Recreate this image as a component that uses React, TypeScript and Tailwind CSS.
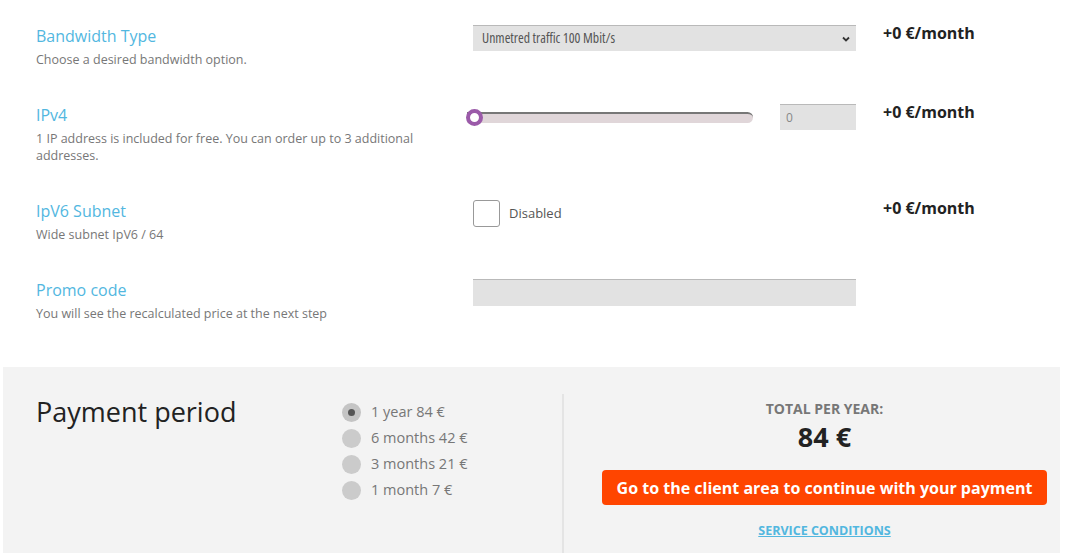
import React from "react";

const font = { fontFamily: "'Open Sans', 'Noto Sans', sans-serif" };

function Row({
  title,
  desc,
  control,
  price,
}: {
  title: string;
  desc: React.ReactNode;
  control: React.ReactNode;
  price?: string;
}) {
  return (
    <div className="flex">
      <div className="w-[437px] shrink-0 pr-[20px]">
        <div className="text-[16px] leading-[24px] text-[#52b7df]">{title}</div>
        <div className="mt-[3px] text-[12.5px] leading-[17px] text-[#777]">{desc}</div>
      </div>
      <div className="w-[383px] shrink-0 pt-[1px]">{control}</div>
      <div className="pl-[27px] text-[16px] font-bold leading-[18px] text-[#222]">{price}</div>
    </div>
  );
}

export default function App() {
  const periods = [
    { label: "1 year 84 €", checked: true },
    { label: "6 months 42 €", checked: false },
    { label: "3 months 21 €", checked: false },
    { label: "1 month 7 €", checked: false },
  ];
  return (
    <div style={font} className="w-[1065px] h-[553px] overflow-hidden bg-white">
      <div className="flex flex-col gap-[35px] pl-[36px] pt-[24px]">
        <Row
          title="Bandwidth Type"
          desc="Choose a desired bandwidth option."
          price="+0 €/month"
          control={
            <div className="flex h-[26px] items-center justify-between border-t border-[#b9b9b9] bg-[#e2e2e2] pl-[9px] pr-[4px] text-[13.8px] text-[#555]">
              <span className="[font-stretch:75%]">Unmetred traffic 100 Mbit/s</span>
              <svg width="12" height="12" viewBox="0 0 12 12">
                <path d="M3 4.5 L6 7.5 L9 4.5" fill="none" stroke="#333" strokeWidth="1.8" />
              </svg>
            </div>
          }
        />
        <Row
          title="IPv4"
          desc={<>1 IP address is included for free. You can order up to 3 additional addresses.</>}
          price="+0 €/month"
          control={
            <div className="flex items-center">
              <div className="relative ml-[-6px] h-[11px] w-[286px] rounded-r-[6px] border-t-2 border-[#777] bg-[#e0d6d9]">
                <div className="absolute left-[-1px] top-[-5px] h-[17px] w-[17px] rounded-full border-[4px] border-[#9b5aa9] bg-white"></div>
              </div>
              <div className="ml-[27px] flex h-[26px] w-[76px] items-center border-t border-[#b9b9b9] bg-[#e2e2e2] pl-[6px] text-[12px] text-[#888]">
                0
              </div>
            </div>
          }
        />
        <Row
          title="IpV6 Subnet"
          desc="Wide subnet IpV6 / 64"
          price="+0 €/month"
          control={
            <div className="flex items-center">
              <div className="h-[27px] w-[27px] rounded-[3px] border border-[#999] bg-white"></div>
              <span className="ml-[9px] text-[13px] text-[#555]">Disabled</span>
            </div>
          }
        />
        <Row
          title="Promo code"
          desc="You will see the recalculated price at the next step"
          control={<div className="h-[27px] border-t border-[#b9b9b9] bg-[#e2e2e2]"></div>}
        />
      </div>

      <div className="ml-[3px] mr-[5px] mt-[45px] flex h-[200px] bg-[#f3f3f3] pt-[27px]">
        <div className="w-[339px] shrink-0 pl-[33px] text-[27px] leading-[36px] text-[#222]">
          Payment period
        </div>
        <div className="w-[220px] shrink-0 pt-[5px]">
          {periods.map((p) => (
            <div key={p.label} className="flex h-[26px] items-center">
              <div
                className={
                  p.checked
                    ? "flex h-[19px] w-[19px] items-center justify-center rounded-full bg-[#c4c4c4]"
                    : "h-[19px] w-[19px] rounded-full bg-[#cbcbcb]"
                }
              >
                {p.checked && <div className="h-[7px] w-[7px] rounded-full bg-[#555]"></div>}
              </div>
              <span className="ml-[10px] text-[14.5px] text-[#777]">{p.label}</span>
            </div>
          ))}
        </div>
        <div className="w-[2px] shrink-0 bg-[#e4e4e4]"></div>
        <div className="flex flex-1 flex-col items-center pl-[38px] pr-[13px] pt-[6px]">
          <div className="text-[14px] font-bold leading-[18px] text-[#777]">TOTAL PER YEAR:</div>
          <div className="mt-[3px] text-[27px] font-bold leading-[32px] text-[#222]">84 €</div>
          <button className="mt-[17px] flex h-[35px] w-full items-center justify-center rounded-[4px] bg-[#ff4500] text-[16px] font-bold text-white">
            Go to the client area to continue with your payment
          </button>
          <a className="mt-[17px] text-[12.5px] font-bold leading-[18px] text-[#52b7df] underline">
            SERVICE CONDITIONS
          </a>
        </div>
      </div>
    </div>
  );
}
